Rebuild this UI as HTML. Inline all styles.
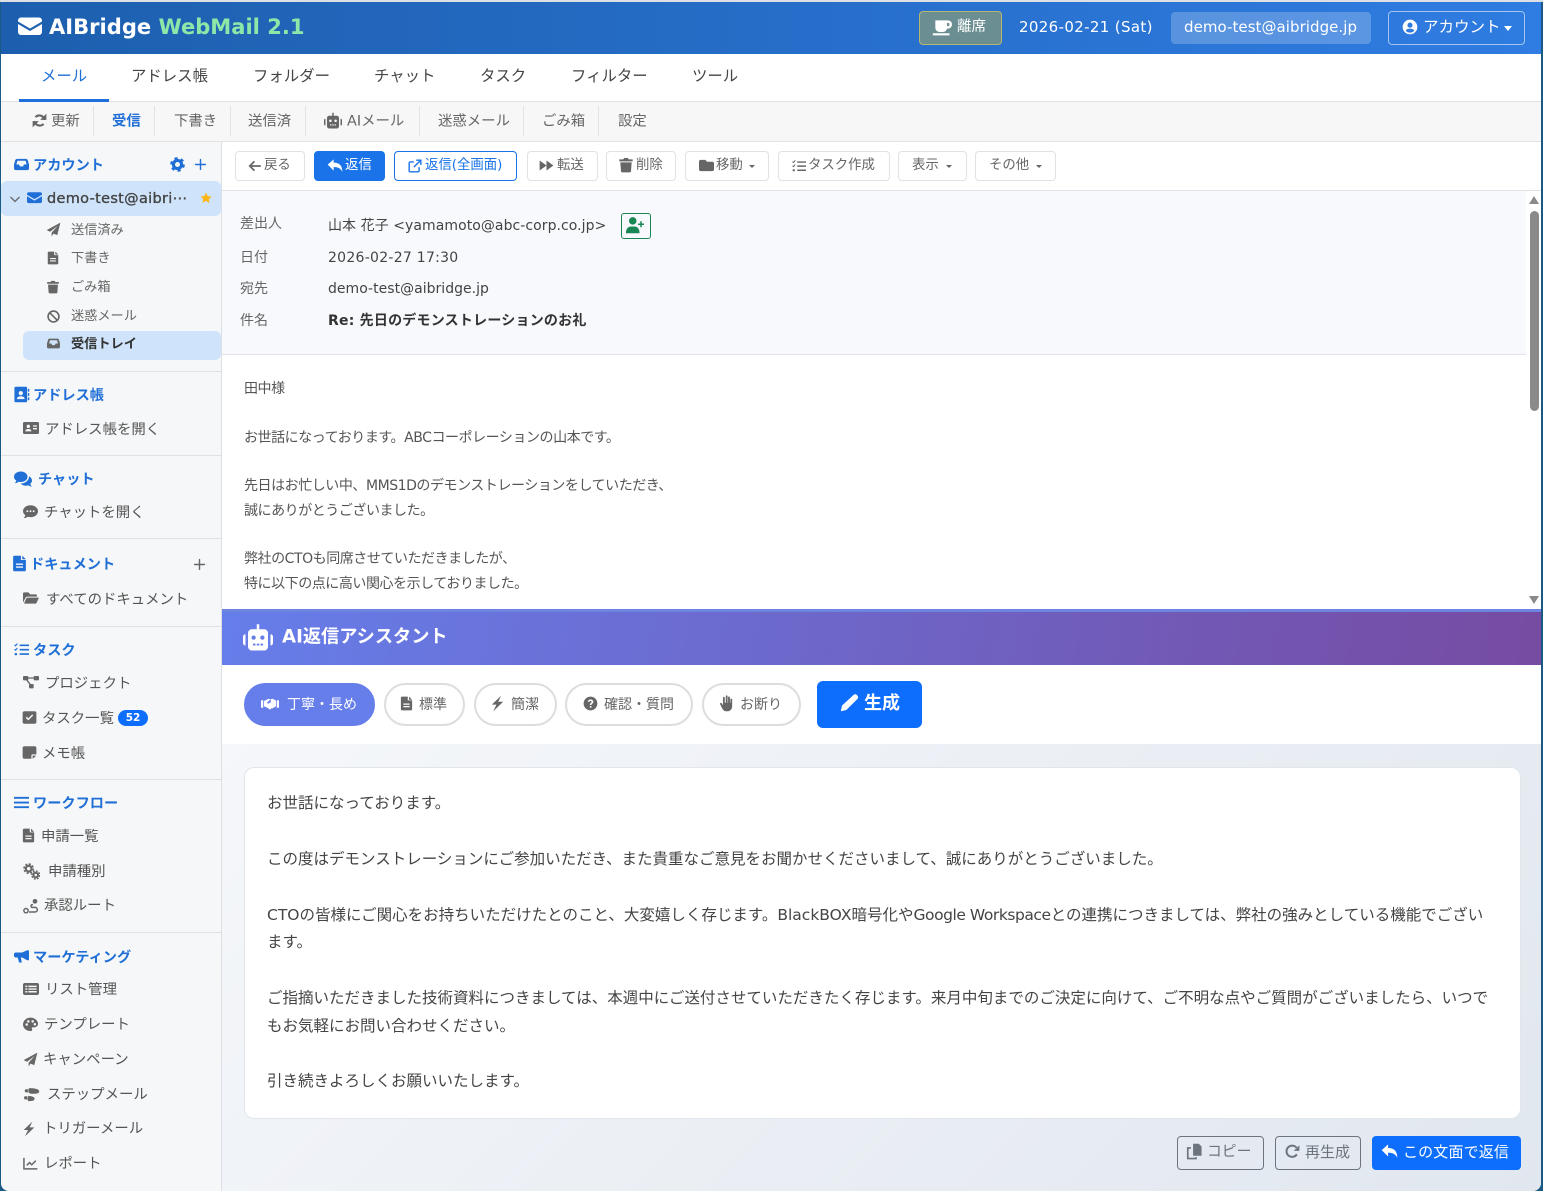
<!DOCTYPE html>
<html lang="ja"><head><meta charset="utf-8"><title>AIBridge WebMail</title>
<style>
html,body{margin:0;padding:0;width:1543px;height:1191px;overflow:hidden;background:#1c5a86}
body{position:relative;font-family:"DejaVu Sans","Noto Sans CJK JP",sans-serif;color:#444}
#w{position:absolute;left:1px;top:2px;width:1540px;height:1189px;background:#fff;overflow:hidden;border-radius:0 0 8px 8px}
#a{position:absolute;left:-1px;top:-2px;width:1543px;height:1191px}
#tp{position:absolute;left:0;top:0;width:1543px;height:2px;background:#dde1e5}
.b,.t,.i{position:absolute}
.t{white-space:nowrap;line-height:20px;height:20px;transform:translateY(1px)}
.i{fill:currentColor;overflow:visible}
.s{font-size:14.4px;color:#555;transform:translateY(2px)}
.h{font-size:14.2px;color:#1f6fd6;font-weight:700}
.n{font-size:15.4px;color:#444}
.u{font-size:14.4px;color:#666;transform:translateY(1.5px)}
.m{font-size:13.4px;color:#666;transform:translateY(2px)}
.g{font-size:14px;color:#555;letter-spacing:-.45px}
.c{font-size:15.5px;color:#444;transform:translateY(1px)}
.btn{position:absolute;top:151px;height:28px;border:1px solid #dfe2e6;border-radius:4px;background:#fff}
.pill{position:absolute;top:683px;height:39px;border:2px solid #ddd;border-radius:22px;background:#fff}
.d{position:absolute;left:1px;width:220px;height:1px;background:#dfe1e4}
</style></head><body>
<svg width="0" height="0" style="position:absolute"><defs>
<symbol id="mail" viewBox="0 0 24 24"><path d="M3 3.500h18a3 3 0 0 1 3 3v1L12 14.500 0 7.500v-1a3 3 0 0 1 3-3zM0 10l12 7 12-7v8a3 3 0 0 1-3 3H3a3 3 0 0 1-3-3z"/></symbol>
<symbol id="coffee" viewBox="0 0 24 24"><path fill-rule="evenodd" d="M4 4h15a4.500 4.500 0 0 1 0 10h-1a5 5 0 0 1-5 4H9a5 5 0 0 1-5-5zM18 7v4h1a2 2 0 0 0 0-4zM1 19.500h20V22H1z"/></symbol>
<symbol id="user" viewBox="0 0 24 24"><path fill-rule="evenodd" d="M12 1a11 11 0 1 0 0 22 11 11 0 0 0 0-22zM12 5.500a3.800 3.800 0 1 1 0 7.600 3.800 3.800 0 0 1 0-7.600zM12 20.500a8.500 8.500 0 0 1-6.500-3c1-1.800 3.500-3 6.500-3s5.500 1.200 6.500 3a8.500 8.500 0 0 1-6.500 3z"/></symbol>
<symbol id="sync" viewBox="0 0 24 24"><path fill="none" stroke="currentColor" stroke-width="3.400" d="M20 11A8.500 8.500 0 0 0 5.500 6.500M4 13A8.500 8.500 0 0 0 18.500 17.500"/><path d="M23 1v10h-10zM1 23V13h10z"/></symbol>
<symbol id="robot" viewBox="0 0 24 24"><path fill-rule="evenodd" d="M11 1h2v4h4a3 3 0 0 1 3 3v11a3 3 0 0 1-3 3H7a3 3 0 0 1-3-3V8a3 3 0 0 1 3-3h4zM8.500 10a1.700 1.700 0 1 0 0 3.400 1.700 1.700 0 0 0 0-3.400zM15.500 10a1.700 1.700 0 1 0 0 3.400 1.700 1.700 0 0 0 0-3.400zM8 16.500v1.500h2v-1.500zM11 16.500v1.500h2v-1.500zM14 16.500v1.500h2v-1.500z"/><path d="M0 11a2 2 0 0 1 2-2v9a2 2 0 0 1-2-2zM24 11a2 2 0 0 0-2-2v9a2 2 0 0 0 2-2z"/></symbol>
<symbol id="inbox" viewBox="0 0 24 24"><path fill-rule="evenodd" d="M5 3h14a3 3 0 0 1 3 2l2 7v6a3 3 0 0 1-3 3H3a3 3 0 0 1-3-3v-6l2-7a3 3 0 0 1 3-2zM5.500 6L3.800 12H8l1.500 3h5l1.500-3h4.200L18.500 6z"/></symbol>
<symbol id="cog" viewBox="0 0 24 24"><circle cx="12" cy="12" r="6.500" fill="none" stroke="currentColor" stroke-width="5"/><circle cx="12" cy="12" r="10" fill="none" stroke="currentColor" stroke-width="3.500" stroke-dasharray="5 5.470"/></symbol>
<symbol id="plus" viewBox="0 0 24 24"><path fill="none" stroke="currentColor" stroke-width="2.600" stroke-linecap="round" d="M12 3v18M3 12h18"/></symbol>
<symbol id="star" viewBox="0 0 24 24"><path d="M12 1l3.400 7.200 7.900 1-5.800 5.500 1.500 7.800L12 17.700l-7 3.800 1.500-7.800L.7 9.200l7.900-1z"/></symbol>
<symbol id="chev" viewBox="0 0 24 24"><path fill="none" stroke="currentColor" stroke-width="2.600" d="M3 8l9 9 9-9"/></symbol>
<symbol id="send" viewBox="0 0 24 24"><path d="M23 1L18 21l-6-2.500L9 23v-6L19 6 6.500 15.500 1 13z"/></symbol>
<symbol id="file" viewBox="0 0 24 24"><path fill-rule="evenodd" d="M5 1h9v6h7v14a2 2 0 0 1-2 2H5a2 2 0 0 1-2-2V3a2 2 0 0 1 2-2zM16 1l5 5h-5zM7 12v2h10v-2zM7 16v2h10v-2z"/></symbol>
<symbol id="trash" viewBox="0 0 24 24"><path d="M2 3.500h6L9 1.500h6l1 2h6v3H2zM3.500 8h17l-1 13.500a2 2 0 0 1-2 1.500h-11a2 2 0 0 1-2-1.500z"/></symbol>
<symbol id="ban" viewBox="0 0 24 24"><circle cx="12" cy="12" r="10" fill="none" stroke="currentColor" stroke-width="3"/><path stroke="currentColor" stroke-width="3" d="M5 5l14 14"/></symbol>
<symbol id="idcard" viewBox="0 0 24 24"><path fill-rule="evenodd" d="M2 3h20a2 2 0 0 1 2 2v14a2 2 0 0 1-2 2H2a2 2 0 0 1-2-2V5a2 2 0 0 1 2-2zM8 7a2.500 2.500 0 1 0 0 5 2.500 2.500 0 0 0 0-5zM3.500 17h9c0-2.500-2-3.500-4.500-3.500S3.500 14.500 3.500 17zM15 8v2h6V8zM15 12v2h6v-2z"/></symbol>
<symbol id="abook" viewBox="0 0 24 24"><path fill-rule="evenodd" d="M4 1h14a2 2 0 0 1 2 2v18a2 2 0 0 1-2 2H4a2 2 0 0 1-2-2V3a2 2 0 0 1 2-2zM11 7a3 3 0 1 0 0 6 3 3 0 0 0 0-6zM5.500 18.500h11c0-2.500-2.500-4-5.500-4s-5.500 1.500-5.500 4z"/><path d="M21 4h2v4h-2zM21 10h2v4h-2zM21 16h2v4h-2z"/></symbol>
<symbol id="comments" viewBox="0 0 24 24"><path d="M9 2c5 0 9 3 9 7s-4 7-9 7c-1 0-2 0-3-.4C4.500 17 3 17.500 1 17.500c1-1 2-2.300 2-3.500-2-1.200-3-3-3-5 0-4 4-7 9-7z"/><path d="M20 8.500c2.500 1.200 4 3.100 4 5.500 0 1.800-.9 3.300-2.300 4.400 0 1.200 1.100 2.500 2.300 3.600-2 0-3.800-.6-5-1.600-1 .4-2 .6-3.200.6-2.800 0-5.300-1.200-6.800-3 5.800 0 11-3.800 11-9.300z"/></symbol>
<symbol id="comment" viewBox="0 0 24 24"><path fill-rule="evenodd" d="M12 2c6.600 0 12 4 12 9.500S18.600 21 12 21c-1.500 0-2.800-.2-4-.6C6.500 21.500 4 22.500 1 22.500c1.500-1.500 2.500-3.200 2.600-4.700C1.400 16 0 13.900 0 11.500 0 6 5.400 2 12 2zM7 10a1.500 1.500 0 1 0 0 3 1.500 1.500 0 0 0 0-3zM12 10a1.500 1.500 0 1 0 0 3 1.500 1.500 0 0 0 0-3zM17 10a1.500 1.500 0 1 0 0 3 1.500 1.500 0 0 0 0-3z"/></symbol>
<symbol id="fopen" viewBox="0 0 24 24"><path d="M0 5.500a2 2 0 0 1 2-2h6l3 3h8a2 2 0 0 1 2 2V10H6.500a3 3 0 0 0-2.700 1.700L0 19z"/><path d="M6.500 11.500H24l-3.800 8a2 2 0 0 1-1.800 1H1.500l3.400-8a2 2 0 0 1 1.600-1z"/></symbol>
<symbol id="tasks" viewBox="0 0 24 24"><path d="M9 4h15v2.500H9zM9 11h15v2.500H9zM9 18h15v2.500H9z"/><path fill="none" stroke="currentColor" stroke-width="1.800" d="M1 4.500l1.500 1.500L5.500 2.500M1 11.500l1.500 1.500 3-3.500"/><circle cx="3" cy="19.300" r="2"/></symbol>
<symbol id="proj" viewBox="0 0 24 24"><rect x="0" y="3" width="8" height="6.500" rx="1.500"/><rect x="16" y="3" width="8" height="6.500" rx="1.500"/><rect x="9" y="15" width="7" height="6.500" rx="1.500"/><path fill="none" stroke="currentColor" stroke-width="2" d="M7 6h10M5 8l6 8"/></symbol>
<symbol id="check" viewBox="0 0 24 24"><path fill-rule="evenodd" d="M4 2h16a3 3 0 0 1 3 3v14a3 3 0 0 1-3 3H4a3 3 0 0 1-3-3V5a3 3 0 0 1 3-3zM18 8.500L16.300 7l-6.200 6.200-2.400-2.400L6 12.500l4.100 4.100z"/></symbol>
<symbol id="note" viewBox="0 0 24 24"><path d="M4 2h16a3 3 0 0 1 3 3v10h-6a2 2 0 0 0-2 2v5H4a3 3 0 0 1-3-3V5a3 3 0 0 1 3-3zM23 17l-6 5v-5z"/></symbol>
<symbol id="bars" viewBox="0 0 24 24"><path d="M0 3h24v3H0zM0 10.500h24v3H0zM0 18h24v3H0z"/></symbol>
<symbol id="cogs" viewBox="0 0 24 24"><circle cx="8" cy="8" r="4" fill="none" stroke="currentColor" stroke-width="3"/><circle cx="8" cy="8" r="6.500" fill="none" stroke="currentColor" stroke-width="2.200" stroke-dasharray="3 2.100"/><circle cx="18" cy="17" r="3.200" fill="none" stroke="currentColor" stroke-width="2.800"/><circle cx="18" cy="17" r="5.600" fill="none" stroke="currentColor" stroke-width="2" stroke-dasharray="2.600 1.800"/></symbol>
<symbol id="route" viewBox="0 0 24 24"><circle cx="4.500" cy="19" r="3.200" fill="none" stroke="currentColor" stroke-width="2.200"/><circle cx="18" cy="5" r="3.500"/><path fill="none" stroke="currentColor" stroke-width="2.200" d="M9 21h9a3 3 0 0 0 0-7h-5a2.500 2.500 0 0 1 0-4h2"/></symbol>
<symbol id="horn" viewBox="0 0 24 24"><path d="M21 2h1.500A1.500 1.500 0 0 1 24 3.500v13a1.500 1.500 0 0 1-1.500 1.500H21l-8-4.500h-2l1.500 8H8L6 13.500H3a3 3 0 0 1-3-3v-2a3 3 0 0 1 3-3h10z"/></symbol>
<symbol id="list" viewBox="0 0 24 24"><path fill-rule="evenodd" d="M3 3h18a3 3 0 0 1 3 3v12a3 3 0 0 1-3 3H3a3 3 0 0 1-3-3V6a3 3 0 0 1 3-3zM3.500 7v2.200h3V7zM8 7v2.200h12.500V7zM3.500 11v2.200h3V11zM8 11v2.200h12.500V11zM3.500 15v2.200h3V15zM8 15v2.200h12.500V15z"/></symbol>
<symbol id="palette" viewBox="0 0 24 24"><path fill-rule="evenodd" d="M12 1c6.600 0 12 4.500 12 10 0 3.500-2.800 5.500-6 5.500h-2.500c-1.500 0-2 1.500-1.200 2.500.7 1 .7 3.500-1.800 3.500C5.500 22.500 0 18 0 12 0 6 5.400 1 12 1zM6 10a2 2 0 1 0 0 4 2 2 0 0 0 0-4zM8.500 5a2 2 0 1 0 0 4 2 2 0 0 0 0-4zM15.500 5a2 2 0 1 0 0 4 2 2 0 0 0 0-4zM19 9.500a2 2 0 1 0 0 4 2 2 0 0 0 0-4z"/></symbol>
<symbol id="steps" viewBox="0 0 24 24"><path d="M9 3c4 0 9 .5 12 2 2 1 2.500 3 1 4.500S17 11 13 11c-2 0-3-.5-4-1-2-.2-2-6.800 0-7zM4 4.500h3V9H4c-2 0-2-4.500 0-4.500zM8 14c3 .5 7 1 8 2.500s0 4-3 4.500c-3 .5-4 0-5 .5-2 0-2-7 0-7.500zM3 14.500h3V19H3c-2 0-2-4.500 0-4.500z"/></symbol>
<symbol id="bolt" viewBox="0 0 24 24"><path d="M17 1L4 13.500h6.500L6 23l14-13.500h-7z"/></symbol>
<symbol id="chart" viewBox="0 0 24 24"><path fill="none" stroke="currentColor" stroke-width="2.400" d="M1.500 3v17.500H23M6 15l4.500-4.500 3.500 3.500 6.500-6.500"/></symbol>
<symbol id="left" viewBox="0 0 24 24"><path fill="none" stroke="currentColor" stroke-width="3" d="M22 12H4M11 4l-8 8 8 8"/></symbol>
<symbol id="reply" viewBox="0 0 24 24"><path d="M1 10l9-8v5c7 0 13 3 13 14-2-5-6-7.500-13-7.500V19z"/></symbol>
<symbol id="ext" viewBox="0 0 24 24"><path fill="none" stroke="currentColor" stroke-width="2.400" d="M19 14v6a2 2 0 0 1-2 2H4a2 2 0 0 1-2-2V7a2 2 0 0 1 2-2h6M14 2h8v8M22 2L10 14"/></symbol>
<symbol id="fwd" viewBox="0 0 24 24"><path d="M1 4l11 8-11 8zM12 4l11 8-11 8z"/></symbol>
<symbol id="folder" viewBox="0 0 24 24"><path d="M3 3h7l3 3h8a3 3 0 0 1 3 3v9a3 3 0 0 1-3 3H3a3 3 0 0 1-3-3V6a3 3 0 0 1 3-3z"/></symbol>
<symbol id="uplus" viewBox="0 0 24 24"><circle cx="9" cy="6.500" r="5"/><path d="M0 22c0-5 3-8 7-8h4c4 0 7 3 7 8v1H0zM19 7h2v3h3v2h-3v3h-2v-3h-3v-2h3z"/></symbol>
<symbol id="shake" viewBox="0 0 24 24"><path d="M0 7h3v10H0zM21 7h3v10h-3z"/><path d="M4 8l5-2.500c1.500-.5 2.500-.3 3.500.5l-4 3.500c-1 1.500 1 2.500 2.500 1.500l2-1.500 6 6-1.500 1.500-1-.5-1 1.500-1.500-.5-1 1.500c-1.500.5-3-.7-4.500-2L4 15z"/><path d="M13 5.500l2.500-.5L20 7.500V15l-1 .5-6-6z"/></symbol>
<symbol id="qm" viewBox="0 0 24 24"><path fill-rule="evenodd" d="M12 1a11 11 0 1 0 0 22 11 11 0 0 0 0-22zM11 16h2.500v2.500H11zM12 5.500c2.500 0 4.500 1.500 4.500 3.800 0 2.700-3 2.900-3 5H11c0-3 2.800-3.500 2.800-5 0-.8-.8-1.300-1.800-1.300s-1.800.6-2 1.600L7.600 9C8 7 9.700 5.500 12 5.500z"/></symbol>
<symbol id="hand" viewBox="0 0 24 24"><path d="M11 1.500a1.300 1.300 0 0 1 2.500 0V11h.7V3.500a1.300 1.300 0 0 1 2.600 0V11h.7V6a1.300 1.300 0 0 1 2.500 0v10c0 4-3 7-7 7h-1c-3 0-4.500-1.500-6-4l-3-6c-.7-1.500 1.300-2.500 2.300-1.300L7 14.500V4a1.300 1.300 0 0 1 2.600 0v7h1.400z"/></symbol>
<symbol id="pen" viewBox="0 0 24 24"><path d="M17 2.500a3 3 0 0 1 4.300 0l.7.700a3 3 0 0 1 0 4.300L8 21.500 1 23l1.500-7z"/></symbol>
<symbol id="copy" viewBox="0 0 24 24"><path d="M10 1h8l4 4v13H10z"/><path fill="none" stroke="currentColor" stroke-width="2.400" d="M7 7H2.500v15H14v-2"/></symbol>
<symbol id="redo" viewBox="0 0 24 24"><path fill="none" stroke="currentColor" stroke-width="3.200" d="M19 16.500A9 9 0 1 1 18.500 6"/><path d="M23 2v9h-9z"/></symbol>
</defs></svg>
<div id="tp"></div>
<div id="w"><div id="a">
<!-- header -->
<div class="b" style="left:0;top:2px;width:1543px;height:52px;background:linear-gradient(90deg,#1d5fae,#2f7ce2)"></div>
<svg class="i" style="left:18px;top:14px;width:24px;height:24px;color:#fff"><use href="#mail"/></svg>
<div class="t" style="left:49px;top:16px;font-size:21.050px;font-weight:700;color:#fff;line-height:22px;transform:none">AIBridge <span style="color:#8be8a8">WebMail 2.1</span></div>
<div class="b" style="left:919px;top:11px;width:81px;height:32px;background:#6a8e92;border:1px solid #b7b66f;border-radius:4px"></div>
<svg class="i" style="left:932px;top:17px;width:20px;height:20px;color:#fff"><use href="#coffee"/></svg>
<div class="t" style="left:957px;top:16px;font-size:14.500px;color:#fff">離席</div>
<div class="t" style="left:1019px;top:16px;font-size:15px;color:#fff;letter-spacing:.35px">2026-02-21 (Sat)</div>
<div class="b" style="left:1171px;top:12px;width:200px;height:32px;background:rgba(255,255,255,.22);border-radius:4px"></div>
<div class="t" style="left:1184px;top:16px;font-size:15px;color:#fff;letter-spacing:.05px">demo-test@aibridge.jp</div>
<div class="b" style="left:1388px;top:11px;width:135px;height:32px;border:1px solid rgba(255,255,255,.55);border-radius:4px"></div>
<svg class="i" style="left:1402px;top:19px;width:16px;height:16px;color:#fff"><use href="#user"/></svg>
<div class="t" style="left:1423px;top:16px;font-size:15.500px;color:#fff">アカウント</div>
<div class="b" style="left:1504px;top:26px;border:4px solid transparent;border-top:5px solid #fff;border-bottom:0"></div>
<!-- nav -->
<div class="b" style="left:0;top:54px;width:1543px;height:47px;background:#fff;border-bottom:1px solid #dfe1e4"></div>
<div class="t n" style="left:41px;top:65px;color:#1f6fd6">メール</div>
<div class="t n" style="left:131px;top:65px">アドレス帳</div>
<div class="t n" style="left:253px;top:65px">フォルダー</div>
<div class="t n" style="left:374px;top:65px">チャット</div>
<div class="t n" style="left:480px;top:65px">タスク</div>
<div class="t n" style="left:571px;top:65px">フィルター</div>
<div class="t n" style="left:692px;top:65px">ツール</div>
<div class="b" style="left:19px;top:99px;width:90px;height:3px;background:#1c6fdc"></div>
<!-- subnav -->
<div class="b" style="left:0;top:102px;width:1543px;height:39px;background:#f7f7f7;border-bottom:1px solid #dfe1e4"></div>
<svg class="i" style="left:32px;top:113px;width:15px;height:15px;color:#666"><use href="#sync"/></svg>
<div class="t u" style="left:51px;top:110px">更新</div>
<div class="t u" style="left:112px;top:110px;color:#1f6fd6;font-weight:700">受信</div>
<div class="t u" style="left:174px;top:110px">下書き</div>
<div class="t u" style="left:248px;top:110px">送信済</div>
<svg class="i" style="left:324px;top:112px;width:18px;height:18px;color:#666"><use href="#robot"/></svg>
<div class="t u" style="left:347px;top:110px">AIメール</div>
<div class="t u" style="left:438px;top:110px">迷惑メール</div>
<div class="t u" style="left:542px;top:110px">ごみ箱</div>
<div class="t u" style="left:618px;top:110px">設定</div>
<div class="b" style="left:93px;top:106px;width:1px;height:30px;background:#e3e3e3"></div>
<div class="b" style="left:154px;top:106px;width:1px;height:30px;background:#e3e3e3"></div>
<div class="b" style="left:230px;top:106px;width:1px;height:30px;background:#e3e3e3"></div>
<div class="b" style="left:305px;top:106px;width:1px;height:30px;background:#e3e3e3"></div>
<div class="b" style="left:419px;top:106px;width:1px;height:30px;background:#e3e3e3"></div>
<div class="b" style="left:523px;top:106px;width:1px;height:30px;background:#e3e3e3"></div>
<div class="b" style="left:598px;top:106px;width:1px;height:30px;background:#e3e3e3"></div>
<!-- sidebar -->
<div class="b" style="left:0;top:142px;width:221px;height:1049px;background:#f6f7f8;border-right:1px solid #dcdfe3"></div>
<svg class="i" style="left:14px;top:157px;width:15px;height:15px;color:#1f6fd6"><use href="#inbox"/></svg>
<div class="t h" style="left:33px;top:155px">アカウント</div>
<svg class="i" style="left:170px;top:157px;width:15px;height:15px;color:#1f6fd6"><use href="#cog"/></svg>
<svg class="i" style="left:194px;top:158px;width:13px;height:13px;color:#1f6fd6"><use href="#plus"/></svg>
<div class="b" style="left:1px;top:181px;width:220px;height:35px;background:#cfe4fb;border-radius:6px"></div>
<svg class="i" style="left:9px;top:193px;width:12px;height:12px;color:#666"><use href="#chev"/></svg>
<svg class="i" style="left:27px;top:190px;width:15px;height:15px;color:#1f6fd6"><use href="#mail"/></svg>
<div class="t" style="left:47px;top:188px;font-size:14.500px;color:#444;letter-spacing:.3px;-webkit-text-stroke:.35px #444">demo-test@aibri⋯</div>
<svg class="i" style="left:200px;top:192px;width:12px;height:12px;color:#fdb515"><use href="#star"/></svg>
<svg class="i" style="left:46px;top:222px;width:15px;height:15px;color:#666"><use href="#send"/></svg>
<div class="t m" style="left:71px;top:219px;font-size:13.200px">送信済み</div>
<svg class="i" style="left:46px;top:251px;width:14px;height:14px;color:#666"><use href="#file"/></svg>
<div class="t m" style="left:71px;top:247px;font-size:13.200px">下書き</div>
<svg class="i" style="left:46px;top:280px;width:14px;height:14px;color:#666"><use href="#trash"/></svg>
<div class="t m" style="left:71px;top:276px;font-size:13.200px">ごみ箱</div>
<svg class="i" style="left:47px;top:310px;width:13px;height:13px;color:#666"><use href="#ban"/></svg>
<div class="t m" style="left:71px;top:305px;font-size:13.200px">迷惑メール</div>
<div class="b" style="left:23px;top:331px;width:198px;height:29px;background:#cfe4fb;border-radius:6px"></div>
<svg class="i" style="left:47px;top:337px;width:13px;height:13px;color:#666"><use href="#inbox"/></svg>
<div class="t m" style="left:71px;top:333px;font-size:13.200px;color:#333;font-weight:700">受信トレイ</div>
<div class="d" style="top:371px"></div>
<svg class="i" style="left:13px;top:386px;width:17px;height:17px;color:#1f6fd6"><use href="#abook"/></svg>
<div class="t h" style="left:33px;top:385px">アドレス帳</div>
<svg class="i" style="left:23px;top:420px;width:16px;height:16px;color:#666"><use href="#idcard"/></svg>
<div class="t s" style="left:45px;top:418px">アドレス帳を開く</div>
<div class="d" style="top:455px"></div>
<svg class="i" style="left:14px;top:470px;width:18px;height:18px;color:#1f6fd6"><use href="#comments"/></svg>
<div class="t h" style="left:38px;top:469px">チャット</div>
<svg class="i" style="left:23px;top:504px;width:15px;height:15px;color:#666"><use href="#comment"/></svg>
<div class="t s" style="left:44px;top:501px">チャットを開く</div>
<div class="d" style="top:538px"></div>
<svg class="i" style="left:11px;top:555px;width:17px;height:17px;color:#1f6fd6"><use href="#file"/></svg>
<div class="t h" style="left:30px;top:554px">ドキュメント</div>
<svg class="i" style="left:193px;top:558px;width:13px;height:13px;color:#666"><use href="#plus"/></svg>
<svg class="i" style="left:23px;top:590px;width:16px;height:16px;color:#666"><use href="#fopen"/></svg>
<div class="t s" style="left:46px;top:588px">すべてのドキュメント</div>
<div class="d" style="top:626px"></div>
<svg class="i" style="left:14px;top:642px;width:15px;height:15px;color:#1f6fd6"><use href="#tasks"/></svg>
<div class="t h" style="left:33px;top:640px">タスク</div>
<svg class="i" style="left:23px;top:674px;width:16px;height:16px;color:#666"><use href="#proj"/></svg>
<div class="t s" style="left:45px;top:672px">プロジェクト</div>
<svg class="i" style="left:22px;top:710px;width:15px;height:15px;color:#666"><use href="#check"/></svg>
<div class="t s" style="left:42px;top:707px">タスク一覧</div>
<div class="b" style="left:118px;top:710px;width:30px;height:16px;border-radius:8px;background:#0d6efd;color:#fff;font-size:10.500px;font-weight:700;line-height:16px;text-align:center">52</div>
<svg class="i" style="left:22px;top:745px;width:15px;height:15px;color:#666"><use href="#note"/></svg>
<div class="t s" style="left:42px;top:742px">メモ帳</div>
<div class="d" style="top:779px"></div>
<svg class="i" style="left:14px;top:795px;width:15px;height:15px;color:#1f6fd6"><use href="#bars"/></svg>
<div class="t h" style="left:33px;top:793px">ワークフロー</div>
<svg class="i" style="left:21px;top:828px;width:15px;height:15px;color:#666"><use href="#file"/></svg>
<div class="t s" style="left:41px;top:825px">申請一覧</div>
<svg class="i" style="left:23px;top:863px;width:17px;height:17px;color:#666"><use href="#cogs"/></svg>
<div class="t s" style="left:48px;top:860px">申請種別</div>
<svg class="i" style="left:23px;top:898px;width:16px;height:16px;color:#666"><use href="#route"/></svg>
<div class="t s" style="left:44px;top:894px">承認ルート</div>
<div class="d" style="top:932px"></div>
<svg class="i" style="left:14px;top:949px;width:15px;height:15px;color:#1f6fd6"><use href="#horn"/></svg>
<div class="t h" style="left:33px;top:947px">マーケティング</div>
<svg class="i" style="left:23px;top:981px;width:16px;height:16px;color:#666"><use href="#list"/></svg>
<div class="t s" style="left:45px;top:978px">リスト管理</div>
<svg class="i" style="left:23px;top:1017px;width:15px;height:15px;color:#666"><use href="#palette"/></svg>
<div class="t s" style="left:44px;top:1013px">テンプレート</div>
<svg class="i" style="left:23px;top:1052px;width:15px;height:15px;color:#666"><use href="#send"/></svg>
<div class="t s" style="left:43px;top:1048px">キャンペーン</div>
<svg class="i" style="left:23px;top:1086px;width:17px;height:17px;color:#666"><use href="#steps"/></svg>
<div class="t s" style="left:47px;top:1083px">ステップメール</div>
<svg class="i" style="left:21px;top:1121px;width:16px;height:16px;color:#666"><use href="#bolt"/></svg>
<div class="t s" style="left:43px;top:1117px">トリガーメール</div>
<svg class="i" style="left:23px;top:1156px;width:15px;height:15px;color:#666"><use href="#chart"/></svg>
<div class="t s" style="left:44px;top:1152px">レポート</div>
<!-- toolbar -->
<div class="b" style="left:222px;top:142px;width:1319px;height:48px;background:#fff;border-bottom:1px solid #dfe1e4"></div>
<div class="btn" style="left:235px;width:68px"></div>
<svg class="i" style="left:248px;top:159px;width:14px;height:14px;color:#666"><use href="#left"/></svg>
<div class="t m" style="left:264px;top:154px">戻る</div>
<div class="btn" style="left:314px;width:69px;background:#1a73e8;border-color:#1a73e8"></div>
<svg class="i" style="left:327px;top:158px;width:16px;height:16px;color:#fff"><use href="#reply"/></svg>
<div class="t m" style="left:345px;top:154px;color:#fff">返信</div>
<div class="btn" style="left:394px;width:121px;border-color:#1a73e8"></div>
<svg class="i" style="left:408px;top:159px;width:14px;height:14px;color:#1a73e8"><use href="#ext"/></svg>
<div class="t m" style="left:425px;top:154px;color:#1a73e8">返信(全画面)</div>
<div class="btn" style="left:527px;width:69px"></div>
<svg class="i" style="left:539px;top:158px;width:15px;height:15px;color:#666"><use href="#fwd"/></svg>
<div class="t m" style="left:557px;top:154px">転送</div>
<div class="btn" style="left:606px;width:68px"></div>
<svg class="i" style="left:618px;top:157px;width:16px;height:16px;color:#666"><use href="#trash"/></svg>
<div class="t m" style="left:636px;top:154px">削除</div>
<div class="btn" style="left:685px;width:82px"></div>
<svg class="i" style="left:699px;top:158px;width:15px;height:15px;color:#666"><use href="#folder"/></svg>
<div class="t m" style="left:716px;top:154px">移動</div>
<div class="b" style="left:749px;top:165px;border:3px solid transparent;border-top:3.500px solid #666;border-bottom:0"></div>
<div class="btn" style="left:778px;width:110px"></div>
<svg class="i" style="left:792px;top:159px;width:14px;height:14px;color:#666"><use href="#tasks"/></svg>
<div class="t m" style="left:808px;top:154px">タスク作成</div>
<div class="btn" style="left:898px;width:67px"></div>
<div class="t m" style="left:912px;top:154px">表示</div>
<div class="b" style="left:946px;top:165px;border:3px solid transparent;border-top:3.500px solid #666;border-bottom:0"></div>
<div class="btn" style="left:975px;width:79px"></div>
<div class="t m" style="left:989px;top:154px">その他</div>
<div class="b" style="left:1036px;top:165px;border:3px solid transparent;border-top:3.500px solid #666;border-bottom:0"></div>
<!-- email header -->
<div class="b" style="left:222px;top:191px;width:1304px;height:163px;background:#f8f9fc;border-bottom:1px solid #e2e4e8"></div>
<div class="t s" style="left:240px;top:212px;color:#666;font-size:14px">差出人</div>
<div class="t s" style="left:328px;top:214px;color:#444;font-size:14px;letter-spacing:.06px">山本 花子 &lt;yamamoto@abc-corp.co.jp&gt;</div>
<div class="b" style="left:621px;top:213px;width:28px;height:24px;border:1px solid #198754;border-radius:3px"></div>
<svg class="i" style="left:626px;top:216px;width:18px;height:18px;color:#198754"><use href="#uplus"/></svg>
<div class="t s" style="left:240px;top:246px;color:#666;font-size:14px">日付</div>
<div class="t s" style="left:328px;top:246px;color:#444;font-size:14px;letter-spacing:.27px">2026-02-27 17:30</div>
<div class="t s" style="left:240px;top:277px;color:#666;font-size:14px">宛先</div>
<div class="t s" style="left:328px;top:277px;color:#444;font-size:14px;letter-spacing:.02px">demo-test@aibridge.jp</div>
<div class="t s" style="left:240px;top:309px;color:#666;font-size:14px">件名</div>
<div class="t s" style="left:328px;top:309px;color:#333;font-weight:700;font-size:14px;letter-spacing:.22px">Re: 先日のデモンストレーションのお礼</div>
<!-- email body -->
<div class="t g" style="left:244px;top:378px">田中様</div>
<div class="t g" style="left:244px;top:427px">お世話になっております。ABCコーポレーションの山本です。</div>
<div class="t g" style="left:244px;top:475px">先日はお忙しい中、MMS1Dのデモンストレーションをしていただき、</div>
<div class="t g" style="left:244px;top:500px">誠にありがとうございました。</div>
<div class="t g" style="left:244px;top:548px">弊社のCTOも同席させていただきましたが、</div>
<div class="t g" style="left:244px;top:573px">特に以下の点に高い関心を示しておりました。</div>
<!-- scrollbar -->
<div class="b" style="left:1529px;top:196px;border:5px solid transparent;border-bottom:8px solid #8a8a8a;border-top:0"></div>
<div class="b" style="left:1530px;top:211px;width:9px;height:200px;background:#8a8a8a;border-radius:5px"></div>
<div class="b" style="left:1529px;top:596px;border:5px solid transparent;border-top:8px solid #8a8a8a;border-bottom:0"></div>
<!-- AI -->
<div class="b" style="left:222px;top:609px;width:1319px;height:56px;background:linear-gradient(100deg,#667eea,#764ba2);border-top:3px solid #6d84e0;box-sizing:border-box"></div>
<svg class="i" style="left:243px;top:623px;width:30px;height:30px;color:#fff"><use href="#robot"/></svg>
<div class="t" style="left:282px;top:626px;font-size:18.200px;color:#fff;font-weight:700;transform:translateY(1.5px)">AI返信アシスタント</div>
<div class="b" style="left:222px;top:665px;width:1319px;height:79px;background:#fff;border-bottom:1px solid #dfe2e6"></div>
<div class="pill" style="left:244px;width:127px;background:#667eea;border-color:#667eea"></div>
<svg class="i" style="left:261px;top:695px;width:18px;height:18px;color:#fff"><use href="#shake"/></svg>
<div class="t m" style="left:287px;top:694px;color:#fff;font-size:14px;transform:translateY(1px)">丁寧・長め</div>
<div class="pill" style="left:384px;width:77px"></div>
<svg class="i" style="left:399px;top:696px;width:15px;height:15px;color:#666"><use href="#file"/></svg>
<div class="t m" style="left:419px;top:694px;font-size:14px;transform:translateY(1px)">標準</div>
<div class="pill" style="left:474px;width:79px"></div>
<svg class="i" style="left:489px;top:695px;width:17px;height:17px;color:#666"><use href="#bolt"/></svg>
<div class="t m" style="left:511px;top:694px;font-size:14px;transform:translateY(1px)">簡潔</div>
<div class="pill" style="left:565px;width:124px"></div>
<svg class="i" style="left:583px;top:696px;width:15px;height:15px;color:#666"><use href="#qm"/></svg>
<div class="t m" style="left:604px;top:694px;font-size:14px;transform:translateY(1px)">確認・質問</div>
<div class="pill" style="left:702px;width:95px"></div>
<svg class="i" style="left:718px;top:695px;width:17px;height:17px;color:#666"><use href="#hand"/></svg>
<div class="t m" style="left:740px;top:694px;font-size:14px;transform:translateY(1px)">お断り</div>
<div class="b" style="left:817px;top:681px;width:105px;height:47px;background:#0d6efd;border-radius:6px"></div>
<svg class="i" style="left:840px;top:693px;width:19px;height:19px;color:#fff"><use href="#pen"/></svg>
<div class="t" style="left:864px;top:693px;font-size:18px;font-weight:700;color:#fff">生成</div>
<!-- result -->
<div class="b" style="left:222px;top:744px;width:1319px;height:447px;background:linear-gradient(135deg,#f5f7fa,#e1e7ef)"></div>
<div class="b" style="left:244px;top:767px;width:1275px;height:350px;background:#fff;border:1px solid #e2e5e9;border-radius:10px"></div>
<div class="t c" style="left:267px;top:792px">お世話になっております。</div>
<div class="t c" style="left:267px;top:848px">この度はデモンストレーションにご参加いただき、また貴重なご意見をお聞かせくださいまして、誠にありがとうございました。</div>
<div class="t c" style="left:267px;top:904px">CTOの皆様にご関心をお持ちいただけたとのこと、大変嬉しく存じます。BlackBOX暗号化や<span style="letter-spacing:-.45px">Google Workspace</span>との連携につきましては、弊社の強みとしている機能でござい</div>
<div class="t c" style="left:267px;top:931px">ます。</div>
<div class="t c" style="left:267px;top:987px">ご指摘いただきました技術資料につきましては、本週中にご送付させていただきたく存じます。来月中旬までのご決定に向けて、ご不明な点やご質問がございましたら、いつで</div>
<div class="t c" style="left:267px;top:1015px">もお気軽にお問い合わせください。</div>
<div class="t c" style="left:267px;top:1070px">引き続きよろしくお願いいたします。</div>
<div class="b" style="left:1177px;top:1136px;width:85px;height:32px;border:1px solid #6c757d;border-radius:4px"></div>
<svg class="i" style="left:1186px;top:1143px;width:17px;height:17px;color:#6c757d"><use href="#copy"/></svg>
<div class="t" style="left:1207px;top:1141px;font-size:14.800px;color:#6c757d">コピー</div>
<div class="b" style="left:1275px;top:1136px;width:84px;height:32px;border:1px solid #6c757d;border-radius:4px"></div>
<svg class="i" style="left:1285px;top:1144px;width:15px;height:15px;color:#6c757d"><use href="#redo"/></svg>
<div class="t" style="left:1305px;top:1141px;font-size:15px;color:#6c757d">再生成</div>
<div class="b" style="left:1372px;top:1136px;width:149px;height:34px;background:#0d6efd;border-radius:4px"></div>
<svg class="i" style="left:1381px;top:1143px;width:17px;height:17px;color:#fff"><use href="#reply"/></svg>
<div class="t" style="left:1403px;top:1141px;font-size:15px;color:#fff;letter-spacing:.15px">この文面で返信</div>
</div></div>
</body></html>
